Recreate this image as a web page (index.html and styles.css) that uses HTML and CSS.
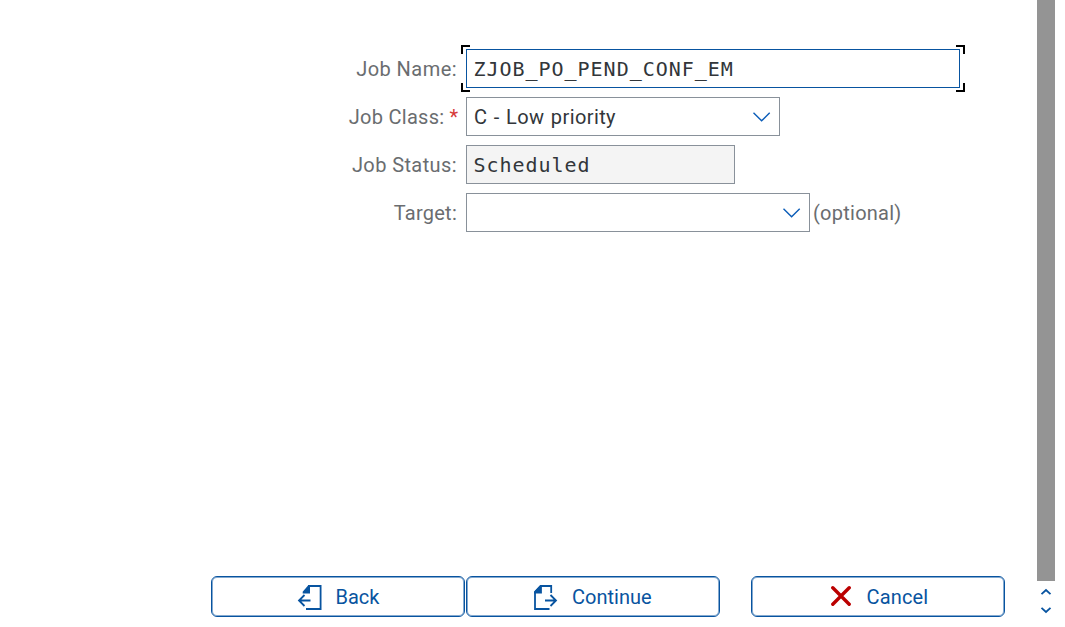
FILE: index.html
```html
<!DOCTYPE html>
<html lang="en">
<head>
<meta charset="utf-8">
<title>Job</title>
<link rel="stylesheet" href="styles.css">
</head>
<body>
<div class="dialog">
  <main class="content">
    <form class="form">
      <label class="label"><span class="t-name">Job Name:</span></label>
      <div class="field field-name"><span class="mono">ZJOB_PO_PEND_CONF_EM</span>
        <i class="corner tl"></i><i class="corner tr"></i><i class="corner bl"></i><i class="corner br"></i>
      </div>
      <label class="label label-required"><span class="t-class">Job Class:</span><span class="star">*</span></label>
      <div class="field field-class"><span class="t-low">C - Low priority</span>
        <svg class="chevron" width="18" height="10" viewBox="0 0 18 10"><path d="M.5 .8 8.6 8.8 16.7 .8"/></svg>
      </div>
      <label class="label"><span class="t-status">Job Status:</span></label>
      <div class="field field-status"><span class="mono">Scheduled</span></div>
      <label class="label"><span class="t-target">Target:</span></label>
      <div class="target-row">
        <div class="field field-target">
          <svg class="chevron" width="18" height="10" viewBox="0 0 18 10"><path d="M.5 .8 8.6 8.8 16.7 .8"/></svg>
        </div>
        <span class="optional">(optional)</span>
      </div>
    </form>
    <footer class="actions">
      <button class="button back" type="button">
        <svg class="icon" width="26" height="26" viewBox="0 0 26 26"><path d="M11 2H23.6V25H9" /><path d="M13.5 16.5H2M7.5 11 2 16.5 7.5 22"/><path class="fill" d="M13 1.1V9.4H5.7V7.8L11.5 1.1Z"/></svg>
        <span class="t-back">Back</span>
      </button>
      <button class="button continue" type="button">
        <svg class="icon" width="26" height="26" viewBox="0 0 26 26"><path d="M19.2 9V2H9L3 8V25H17.5"/><path d="M13 16.5H24M18.5 11 24 16.5 18.5 22"/><path class="fill" d="M9.9 1.1V9.4H2.1V7.5L8.2 1.1Z"/></svg>
        <span class="t-continue">Continue</span>
      </button>
      <button class="button cancel" type="button">
        <svg class="cross" width="20" height="20" viewBox="0 0 20 20"><path d="M1.8 1.8 18.2 18.2M18.2 1.8 1.8 18.2"/></svg>
        <span class="t-cancel">Cancel</span>
      </button>
    </footer>
  </main>
  <aside class="scrollbar">
    <div class="thumb"></div>
    <svg class="arrow" width="12" height="8" viewBox="0 0 12 8"><path d="M1.5 6.2 6 2 10.5 6.2"/></svg>
    <svg class="arrow" width="12" height="8" viewBox="0 0 12 8"><path d="M1.5 1.8 6 6 10.5 1.8"/></svg>
  </aside>
</div>
</body>
</html>
```
FILE: styles.css
```css
* { box-sizing: border-box; }
body {
  margin: 0;
  overflow: hidden;
  background: #fff;
  font: 20px/24px Roboto, "Liberation Sans", sans-serif;
  color: #32363a;
}
.dialog { display: flex; width: 1065px; height: 627px; }
.content {
  width: 1037px;
  padding: 49px 0 10px;
  display: flex;
  flex-direction: column;
  justify-content: space-between;
}
.form {
  display: grid;
  grid-template-columns: 457px auto;
  grid-auto-rows: 39px;
  gap: 9px;
}
.label {
  display: flex;
  align-items: center;
  justify-content: flex-end;
  color: #6a6d70;
  white-space: nowrap;
}
.label-required { margin-right: -1px; }
.t-name { letter-spacing: .45px; }
.t-class { letter-spacing: .28px; }
.t-status { letter-spacing: .4px; }
.t-target { letter-spacing: .25px; }
.t-low { letter-spacing: .4px; word-spacing: 1px; }
.star { margin-left: 5px; color: #d63a3a; }
.field {
  position: relative;
  height: 39px;
  padding: 0 7px;
  display: flex;
  align-items: center;
  border: 1px solid #89919a;
  background: #fff;
  white-space: nowrap;
}
.field-name { width: 494px; border-color: #0854a0; }
.field-class { width: 314px; }
.field-status { width: 269px; background: #f4f4f4; }
.field-target { width: 344px; }
.mono {
  margin-left: -.6px;
  font-family: "DejaVu Sans Mono", monospace;
  font-size: 20px;
  letter-spacing: .98px;
}
.chevron {
  margin-left: auto;
  margin-right: 1px;
  fill: none;
  stroke: #0a5cb8;
  stroke-width: 1.4;
}
.corner { position: absolute; width: 9px; height: 9px; border: 0 solid #000; }
.tl { left: -6px; top: -5px; border-width: 2px 0 0 2px; }
.tr { right: -6px; top: -5px; border-width: 2px 2px 0 0; }
.bl { left: -6px; bottom: -5px; border-width: 0 0 2px 2px; }
.br { right: -6px; bottom: -5px; border-width: 0 2px 2px 0; }
.target-row { display: flex; align-items: center; gap: 3px; }
.optional { color: #6a6d70; letter-spacing: .25px; }
.actions { display: flex; padding-left: 211px; }
.button {
  width: 254px;
  height: 41px;
  padding: 0;
  display: flex;
  align-items: center;
  border: 1px solid #0854a0;
  border-radius: 6px;
  box-shadow: inset 0 0 0 1px #84a9cf;
  background: #fff;
  color: #0854a0;
  font: inherit;
}
.continue { margin-left: 1px; }
.cancel { margin-left: 31px; }
.icon { fill: none; stroke: #0854a0; stroke-width: 1.8; }
.icon .fill { fill: #0854a0; stroke: none; }
.back .icon { margin-left: 85px; }
.back span { margin-left: 12.5px; }
.continue .icon { margin-left: 65px; }
.continue span { margin-left: 14px; }
.cross { margin-left: 79px; margin-bottom: 1px; fill: none; stroke: #b00; stroke-width: 3.4; stroke-linecap: round; }
.cancel span { margin-left: 15.6px; letter-spacing: .15px; }
.scrollbar {
  width: 18px;
  display: flex;
  flex-direction: column;
  align-items: center;
}
.thumb { width: 18px; height: 581px; margin-bottom: 7px; background: #949494; }
.arrow { fill: none; stroke: #0854a0; stroke-width: 1.8; }
.arrow + .arrow { margin-top: 10px; }
```
